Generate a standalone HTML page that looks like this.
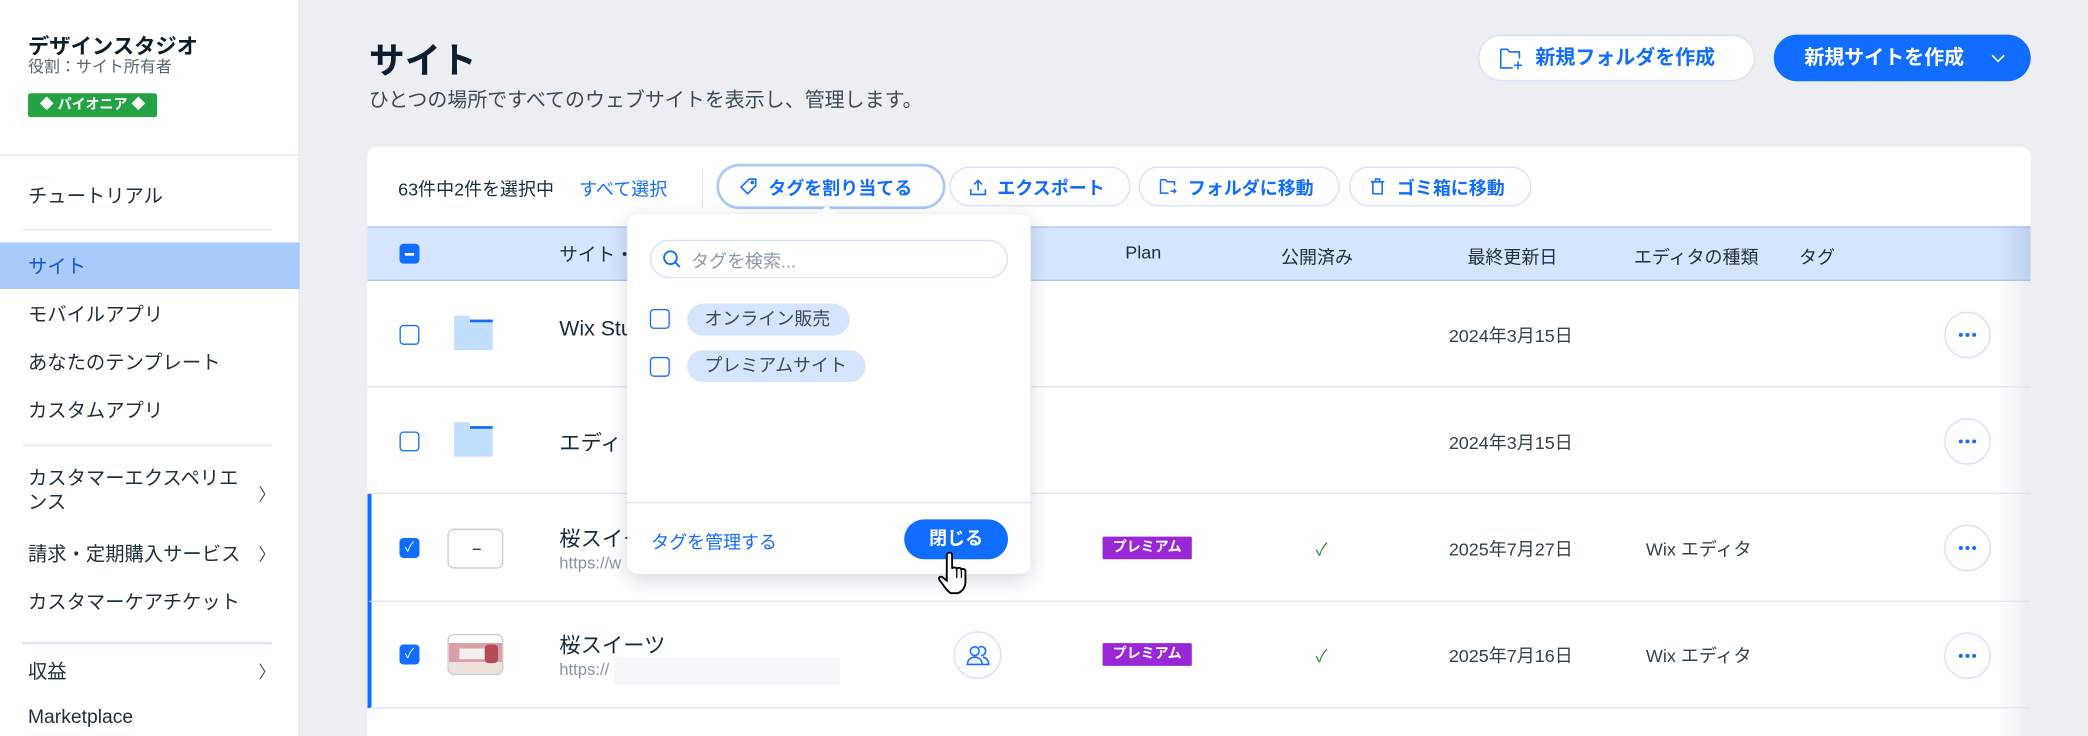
<!DOCTYPE html>
<html><head><meta charset="utf-8"><style>
*{box-sizing:border-box;margin:0;padding:0}
html,body{width:2088px;height:736px;overflow:hidden;background:#eceef2}
#w{position:absolute;left:0;top:0;width:1568px;height:553px;transform:scale(1.33163);transform-origin:0 0;font-family:"Liberation Sans","Noto Sans CJK JP",sans-serif;color:#162d3d}
.a{position:absolute;white-space:nowrap}
.sb{position:absolute;left:0;top:0;width:225px;height:553px;background:#fff;border-right:1px solid #e3e6ea}
.nav{position:absolute;left:21px;font-size:14.5px;color:#20303c}
.hr{position:absolute;height:1px;background:#dfe5ee}
.chev{position:absolute;left:194px;font-size:13px;color:#555}
.pill{position:absolute;top:125px;height:30px;border:1px solid #d5e2f7;border-radius:15px;background:#fff;color:#116dff;font-size:13.5px;font-weight:bold;display:flex;align-items:center;padding-left:14px;gap:8px}
.cb{position:absolute;width:15px;height:15px;border:1.3px solid #116dff;border-radius:3px;background:#fff}
.cbon{background:#116dff}
.row{position:absolute;left:276px;width:1249px;height:81px;border-bottom:1px solid #dfe5ee;background:#fff}
.more{position:absolute;left:1184px;top:23px;width:35px;height:35px;border:1px solid #d5e2f7;border-radius:50%;display:flex;align-items:center;justify-content:center;gap:2px}
.more i{width:3px;height:3px;border-radius:50%;background:#116dff;display:block}
.fold{position:absolute;left:65px;top:29px;width:29px;height:23px;background:#c3dfff}
.fold:before{content:"";position:absolute;left:0;top:-3px;width:12px;height:4px;background:#c3dfff}
.fold:after{content:"";position:absolute;right:0;top:0;width:17px;height:2px;background:#116dff}
.date{position:absolute;left:812px;font-size:13.5px;color:#32414c}
.prem{position:absolute;left:549px;width:67px;height:17px;background:#9a27d5;color:#fff;font-size:10.5px;font-weight:bold;text-align:center;line-height:17px;border-radius:1px}
.chk{position:absolute;left:709px;color:#25952f;font-size:13px}
</style></head><body><div id="w">
<div class="sb">
<div class="a" style="left:21px;top:21px;font-size:16px;font-weight:bold;color:#0c1e2c">デザインスタジオ</div>
<div class="a" style="left:21px;top:41px;font-size:12px;color:#5a6570">役割：サイト所有者</div>
<div class="a" style="left:21px;top:70px;width:97px;height:18px;background:#25a244;border-radius:2px;color:#fff;font-size:10.5px;font-weight:bold;text-align:center;line-height:18px">◆ パイオニア ◆</div>
<div class="hr" style="left:0;top:116px;width:225px"></div>
<div class="nav a" style="top:136px">チュートリアル</div>
<div class="hr" style="left:17px;top:172px;width:187px"></div>
<div class="a" style="left:0;top:182px;width:225px;height:35px;background:#a8cbfb"></div>
<div class="nav a" style="top:189px;color:#1557d1">サイト</div>
<div class="nav a" style="top:225px">モバイルアプリ</div>
<div class="nav a" style="top:261px">あなたのテンプレート</div>
<div class="nav a" style="top:297px">カスタムアプリ</div>
<div class="hr" style="left:17px;top:334px;width:187px"></div>
<div class="nav a" style="top:351px;line-height:18px">カスタマーエクスペリエ<br>ンス</div>
<div class="chev a" style="top:361px">〉</div>
<div class="nav a" style="top:405px">請求・定期購入サービス</div>
<div class="chev a" style="top:406px">〉</div>
<div class="nav a" style="top:441px">カスタマーケアチケット</div>
<div class="hr" style="left:17px;top:482px;width:187px;height:2px"></div>
<div class="nav a" style="top:493px">収益</div>
<div class="chev a" style="top:494px">〉</div>
<div class="nav a" style="top:531px">Marketplace</div>
</div>

<div class="a" style="left:277px;top:24px;font-size:27px;font-weight:bold;color:#0c1e2c">サイト</div>
<div class="a" style="left:277px;top:64px;font-size:15px;color:#3b4a56">ひとつの場所ですべてのウェブサイトを表示し、管理します。</div>
<div class="a" style="left:1110px;top:26px;width:208px;height:35px;background:#fff;border:1px solid #d5e2f7;border-radius:18px;color:#116dff;font-size:15px;font-weight:bold;line-height:33px;padding-left:42px">新規フォルダを作成</div>
<svg class="a" style="left:1125px;top:34px" width="20" height="20" viewBox="0 0 20 20" fill="none" stroke="#116dff" stroke-width="1.2"><path d="M2 3h5l1.5 2H16v5M2 3v14h9"/><path d="M15 12v6M12 15h6"/></svg>
<div class="a" style="left:1332px;top:26px;width:193px;height:35px;background:#116dff;border-radius:18px;color:#fff;font-size:15px;font-weight:bold;line-height:35px;padding-left:23px">新規サイトを作成</div>
<svg class="a" style="left:1495px;top:40px" width="11" height="8" viewBox="0 0 11 8" fill="none" stroke="#fff" stroke-width="1.2"><path d="M1 1.5l4.5 4.5 4.5-4.5"/></svg>

<div class="a" style="left:276px;top:110px;width:1249px;height:443px;background:#fff;border-radius:8px 8px 0 0;overflow:hidden">
<div class="a" style="left:23px;top:21px;font-size:13.5px;color:#162d3d">63件中2件を選択中</div>
<div class="a" style="left:159px;top:21px;font-size:13.5px;color:#116dff">すべて選択</div>
<div class="a" style="left:251px;top:16px;width:1px;height:30px;background:#dfe5ee"></div>
<div class="a" style="left:0;top:60px;width:1249px;height:41px;background:#d5e5fd;border-top:1px solid #a9c8f5;border-bottom:1px solid #a9c8f5"></div>
<div class="a" style="left:1224px;top:60px;width:25px;height:41px;background:linear-gradient(90deg,rgba(150,170,210,0),rgba(150,170,210,.35))"></div>
<div class="a" style="left:1224px;top:101px;width:25px;height:342px;background:linear-gradient(90deg,rgba(220,222,228,0),rgba(220,222,228,.6));z-index:3"></div>
<div class="cb cbon" style="left:24px;top:73px"><div style="position:absolute;left:3px;top:5.5px;width:7px;height:2px;background:#fff"></div></div>
<div class="a" style="left:144px;top:71px;font-size:14px;color:#20303c">サイト・</div>
<div class="a" style="left:569px;top:72px;font-size:13.5px;color:#20303c">Plan</div>
<div class="a" style="left:686px;top:72px;font-size:13.5px;color:#20303c">公開済み</div>
<div class="a" style="left:826px;top:72px;font-size:13.5px;color:#20303c">最終更新日</div>
<div class="a" style="left:951px;top:72px;font-size:13.5px;color:#20303c">エディタの種類</div>
<div class="a" style="left:1075px;top:72px;font-size:13.5px;color:#20303c">タグ</div>

<div class="row" style="left:0;top:101px;height:80px"><div class="cb" style="left:24px;top:33px"></div><div class="fold"></div><div class="a" style="left:144px;top:28px;font-size:16px">Wix Stu</div><div class="date" style="top:30px">2024年3月15日</div><div class="more"><i></i><i></i><i></i></div></div>
<div class="row" style="left:0;top:181px;height:80px"><div class="cb" style="left:24px;top:33px"></div><div class="fold"></div><div class="a" style="left:144px;top:28px;font-size:16px">エディ</div><div class="date" style="top:30px">2024年3月15日</div><div class="more"><i></i><i></i><i></i></div></div>
<div class="row" style="left:0;top:261px;height:81px;border-left:3px solid #116dff"><div class="cb cbon" style="left:21px;top:33px;color:#fff;font-size:10px;text-align:center;line-height:13px">✓</div><div class="a" style="left:57px;top:26px;width:42px;height:30px;border:1px solid #c8cdd3;border-radius:5px"><div style="position:absolute;left:18px;top:14px;width:6px;height:1px;background:#333"></div></div><div class="a" style="left:141px;top:20px;font-size:16px">桜スイー</div><div class="a" style="left:141px;top:45px;font-size:12.5px;color:#8a93a0">https://w</div><div class="prem" style="top:32px">プレミアム</div><div class="chk" style="top:31px">✓</div><div class="date" style="left:809px;top:30px">2025年7月27日</div><div class="a" style="left:957px;top:30px;font-size:13.5px;color:#32414c">Wix エディタ</div><div class="more" style="left:1181px"><i></i><i></i><i></i></div></div>
<div class="row" style="left:0;top:342px;height:80px;border-left:3px solid #116dff"><div class="cb cbon" style="left:21px;top:32px;color:#fff;font-size:10px;text-align:center;line-height:13px">✓</div><div class="a" style="left:57px;top:24px;width:42px;height:31px;border:1px solid #c8cdd3;border-radius:5px;overflow:hidden;background:linear-gradient(180deg,#fff 0 20%,#d9a0a8 20% 70%,#efe2dc 70%)"><div style="position:absolute;left:8px;top:10px;width:24px;height:8px;background:#f5f0f0"></div><div style="position:absolute;right:3px;top:7px;width:10px;height:14px;background:#b44a55;border-radius:3px"></div></div><div class="a" style="left:141px;top:19px;font-size:16px">桜スイーツ</div><div class="a" style="left:141px;top:44px;font-size:12.5px;color:#8a93a0">https://</div><div class="a" style="left:182px;top:42px;width:170px;height:20px;background:#f6f7f8"></div><div class="a" style="left:437px;top:22px;width:36px;height:36px;border:1px solid #d5e2f7;border-radius:50%"><svg style="position:absolute;left:8px;top:8px" width="19" height="19" viewBox="0 0 19 19" fill="none" stroke="#116dff" stroke-width="1.2"><circle cx="7" cy="6" r="3.3"/><path d="M1.5 16c0-3.5 2.5-5.5 5.5-5.5s5.5 2 5.5 5.5z"/><path d="M10 3.2a3.3 3.3 0 1 1 1.8 6M13 10.5c2.5.3 4.5 2.3 4.5 5.5h-4.5"/></svg></div><div class="prem" style="top:31px">プレミアム</div><div class="chk" style="top:30px">✓</div><div class="date" style="left:809px;top:29px">2025年7月16日</div><div class="a" style="left:957px;top:29px;font-size:13.5px;color:#32414c">Wix エディタ</div><div class="more" style="left:1181px"><i></i><i></i><i></i></div></div>
</div>

<div class="pill" style="left:540px;width:168px;box-shadow:0 0 0 2px #a9c8f5;border-color:#fff"><svg width="14" height="14" viewBox="0 0 14 14" fill="none" stroke="#116dff" stroke-width="1.2"><path d="M7.5 1.5h5v5l-6 6-5-5z"/><circle cx="10" cy="4" r=".8"/></svg>タグを割り当てる</div>
<div class="pill" style="left:713px;width:136px"><svg width="13" height="13" viewBox="0 0 13 13" fill="none" stroke="#116dff" stroke-width="1.2"><path d="M6.5 9V1.5M3.5 4.5l3-3 3 3M1 8v4h11V8"/></svg>エクスポート</div>
<div class="pill" style="left:855px;width:151px"><svg width="14" height="14" viewBox="0 0 14 14" fill="none" stroke="#116dff" stroke-width="1.1"><path d="M1.5 2h4l1 1.5h5.5v3M1.5 2v10h6M9 10.5h4M11.5 9l1.5 1.5-1.5 1.5"/></svg>フォルダに移動</div>
<div class="pill" style="left:1013px;width:137px"><svg width="13" height="14" viewBox="0 0 13 14" fill="none" stroke="#116dff" stroke-width="1.2"><path d="M3 3.5h7v9H3zM1.5 3.5h10M5 3.5V1.5h3v2"/></svg>ゴミ箱に移動</div>

<div class="a" style="left:471px;top:161px;width:303px;height:270px;background:#fff;border-radius:8px;box-shadow:0 4px 14px rgba(20,40,70,.18)">
<div class="a" style="left:145px;top:-5px;width:10px;height:10px;background:#fff;transform:rotate(45deg)"></div>
<div class="a" style="left:17px;top:19px;width:269px;height:29px;border:1px solid #d5e2f7;border-radius:15px"></div>
<svg class="a" style="left:26px;top:26px" width="15" height="15" viewBox="0 0 15 15" fill="none" stroke="#116dff" stroke-width="1.4"><circle cx="6.5" cy="6.5" r="4.8"/><path d="M10 10l3.5 3.5"/></svg>
<div class="a" style="left:48px;top:24px;font-size:13.5px;color:#8f99a6">タグを検索...</div>
<div class="cb" style="left:17px;top:71px"></div>
<div class="a" style="left:45px;top:67px;width:122px;height:24px;background:#d5e5fd;border-radius:12px;font-size:13.5px;color:#3b4a56;line-height:24px;padding-left:13px">オンライン販売</div>
<div class="cb" style="left:17px;top:107px"></div>
<div class="a" style="left:45px;top:102px;width:134px;height:24px;background:#d5e5fd;border-radius:12px;font-size:13.5px;color:#3b4a56;line-height:24px;padding-left:13px">プレミアムサイト</div>
<div class="a" style="left:0;top:216px;width:303px;height:1px;background:#dfe5ee"></div>
<div class="a" style="left:18px;top:235px;font-size:13.5px;color:#116dff">タグを管理する</div>
<div class="a" style="left:208px;top:229px;width:78px;height:30px;background:#116dff;border-radius:15px;color:#fff;font-size:13.5px;font-weight:bold;text-align:center;line-height:30px">閉じる</div>
</div>
<svg class="a" style="left:703px;top:413px" width="32" height="34" viewBox="0 0 32 34"><path d="M10 2c1.3 0 2 .8 2 2v10c.5-1.2 3-1.3 3.5.3.6-1.3 3-1.2 3.4.5.8-1 3.1-.7 3.1 1.2v8c0 4-2.5 7.5-6 8.5h-5C8 31 6 27 2.5 22.5c-1-1.4.3-3 2-2.2L8 23V4c0-1.2.8-2 2-2z" fill="#fff" stroke="#000" stroke-width="1.4"/><path d="M15.5 15v6M19 16v5" stroke="#000" stroke-width="1"/></svg>
</div></body></html>
